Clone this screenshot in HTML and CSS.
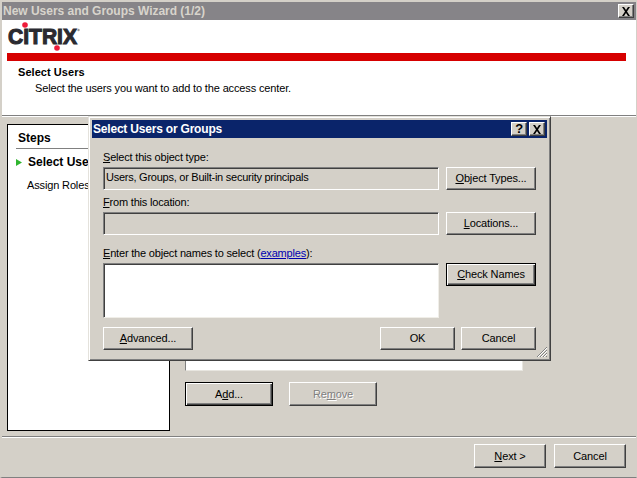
FILE: index.html
```html
<!DOCTYPE html>
<html lang="en">
<head>
<meta charset="utf-8">
<title>New Users and Groups Wizard (1/2)</title>
<link rel="stylesheet" href="styles.css">
</head>
<body>
<div class="window">
  <div class="titlebar">
    <span class="title-text">New Users and Groups Wizard (1/2)</span>
    <span class="capbtn wiz-close"><svg width="10" height="9" viewBox="0 0 10 9"><path d="M1 0h2l2 3 2-3h2L6 4.500 9 9H7L5 6 3 9H1l3-4.500z" fill="#000"/></svg></span>
  </div>
  <div class="header">
    <div class="logo">
      <svg width="84" height="33" viewBox="0 0 84 33">
        <text x="1" y="24" class="logo-text" textLength="69" lengthAdjust="spacingAndGlyphs">CITRIX</text>
        <circle cx="18" cy="5" r="2.800" fill="#ee1c3a"/>
        <circle cx="50" cy="28" r="2.800" fill="#ee1c3a"/>
        <circle cx="71.500" cy="10" r="1.200" fill="#999"/>
      </svg>
    </div>
    <div class="redbar"></div>
    <div class="head-title">Select Users</div>
    <div class="head-sub">Select the users you want to add to the access center.</div>
  </div>
  <div class="body">
    <div class="steps">
      <div class="steps-title">Steps</div>
      <div class="step current"><svg class="arrow" width="6" height="7" viewBox="0 0 6 7"><path d="M0 0l6 3.500L0 7z" fill="#2fb52f"/></svg><span>Select Users</span></div>
      <div class="step next">Assign Roles</div>
    </div>
    <div class="content">
      <div class="listbox"></div>
      <div class="content-buttons">
        <button class="btn default wide"><span>A<u>d</u>d...</span></button>
        <button class="btn disabled wide">Re<u>m</u>ove</button>
      </div>
    </div>
  </div>
  <div class="footer">
    <button class="btn nav"><span><u>N</u>ext &gt;</span></button>
    <button class="btn nav">Cancel</button>
  </div>

  <div class="dialog">
    <div class="dlg-title">
      <span>Select Users or Groups</span>
      <span class="dlg-caps">
        <span class="capbtn help">?</span>
        <span class="capbtn"><svg width="10" height="9" viewBox="0 0 10 9"><path d="M1 0h2l2 3 2-3h2L6 4.500 9 9H7L5 6 3 9H1l3-4.500z" fill="#000"/></svg></span>
      </span>
    </div>
    <div class="dlg-body">
      <label class="lbl lbl-first"><u>S</u>elect this object type:</label>
      <div class="field">Users, Groups, or Built-in security principals</div>
      <button class="btn side"><span><u>O</u>bject Types...</span></button>
      <label class="lbl lbl-second"><u>F</u>rom this location:</label>
      <div class="field"></div>
      <button class="btn side"><span><u>L</u>ocations...</span></button>
      <label class="lbl lbl-third"><u>E</u>nter the object names to select (<a href="#">examples</a>):</label>
      <div class="field names"></div>
      <button class="btn side default"><span><u>C</u>heck Names</span></button>
      <div class="dlg-actions">
        <button class="btn advanced"><span><u>A</u>dvanced...</span></button>
        <div class="dlg-right">
          <button class="btn ok">OK</button>
          <button class="btn ok">Cancel</button>
        </div>
      </div>
    </div>
    <svg class="grip" width="12" height="12" viewBox="0 0 12 12"><path d="M11 1L1 11M11 4L4 11M11 7L7 11M11 10L10 11" stroke="#808080" stroke-width="1" fill="none"/><path d="M11 2L2 11M11 5L5 11M11 8L8 11" stroke="#fff" stroke-width="1" fill="none"/></svg>
  </div>
</div>
</body>
</html>
```
FILE: styles.css
```css
* { box-sizing: border-box; }
html, body { margin: 0; padding: 0; }
body {
  width: 637px;
  height: 478px;
  overflow: hidden;
  font-family: "Liberation Sans", Arial, sans-serif;
  font-size: 11px;
  letter-spacing: -0.14px;
  color: #000;
  background: #d4d0c8;
}
.window {
  position: relative;
  width: 637px;
  height: 478px;
  display: flex;
  flex-direction: column;
  background: #d4d0c8;
  border-top: 2px solid #d4d0c8;
  border-left: 2px solid #d4d0c8;
  border-right: 1px solid #d4d0c8;
  border-bottom: 1px solid #808080;
}
.titlebar {
  height: 18px;
  flex: none;
  display: flex;
  align-items: center;
  justify-content: space-between;
  background: #868488;
  color: #d8d4cc;
  font-size: 12px;
  font-weight: bold;
  letter-spacing: -0.02px;
  padding: 0 2px 0 1px;
}
.capbtn {
  width: 16px;
  height: 14px;
  display: flex;
  align-items: center;
  justify-content: center;
  background: #d4d0c8;
  border-top: 1px solid #fff;
  border-left: 1px solid #fff;
  border-right: 1px solid #404040;
  border-bottom: 1px solid #404040;
  box-shadow: inset -1px -1px 0 #808080;
  color: #000;
}
.header {
  height: 96px;
  flex: none;
  background: #fff;
  border-bottom: 1px solid #808080;
  box-shadow: 0 1px 0 #fff;
  display: flex;
  flex-direction: column;
}
.logo { height: 33px; padding-left: 5px; }
.logo svg { display: block; }
.logo-text {
  font-family: "Liberation Sans", Arial, sans-serif;
  font-weight: bold;
  font-size: 22px;
  letter-spacing: 0;
  fill: #2a2a30;
  stroke: #2a2a30;
  stroke-width: 1.1px;
}
.redbar { height: 8px; margin: 0 10px 0 5px; background: #d60000; }
.head-title { margin: 4px 0 0 16px; line-height: 14px; font-weight: bold; letter-spacing: 0.05px; }
.head-sub { margin: 2px 0 0 33px; line-height: 14px; }

.body {
  flex: 1;
  min-height: 0;
  display: flex;
  padding: 7px 0 5px 5px;
  margin-top: 1px;
}
.steps {
  width: 163px;
  flex: none;
  background: #fff;
  border: 1px solid #000;
  padding: 0 0 0 8px;
}
.steps-title {
  height: 24px;
  line-height: 14px;
  padding: 6px 0 0 2px;
  font-size: 12px;
  font-weight: bold;
  letter-spacing: 0;
  border-bottom: 1px solid #808080;
  margin-right: 8px;
}
.step { line-height: 14px; display: flex; align-items: center; }
.step.current { margin-top: 6px; font-size: 12px; font-weight: bold; letter-spacing: 0; }
.arrow { margin-right: 6px; flex: none; }
.step.next { margin: 9px 0 0 11px; }
.content {
  flex: 1;
  display: flex;
  flex-direction: column;
  margin-left: 15px;
  margin-right: 113px;
}
.listbox {
  flex: 1;
  background: #fff;
  border-top: 1px solid #808080;
  border-left: 1px solid #808080;
  border-right: 1px solid #e8e6e0;
  border-bottom: 1px solid #e8e6e0;
  margin-bottom: 11px;
}
.content-buttons { display: flex; gap: 16px; margin-bottom: 25px; }

.btn {
  display: flex;
  align-items: center;
  justify-content: center;
  padding: 0;
  margin: 0;
  font: inherit;
  letter-spacing: inherit;
  color: #000;
  background: #d4d0c8;
  border-top: 1px solid #fff;
  border-left: 1px solid #fff;
  border-right: 1px solid #404040;
  border-bottom: 1px solid #404040;
  box-shadow: inset -1px -1px 0 #808080;
  height: 23px;
}
.btn.default {
  border: 1px solid #000;
  box-shadow: inset 1px 1px 0 #fff, inset -1px -1px 0 #404040, inset -2px -2px 0 #808080;
}
.btn.wide { width: 88px; height: 24px; }
.btn.disabled { color: #808080; text-shadow: 1px 1px 0 #fff; }
.btn.nav { width: 72px; height: 24px; }
.btn.side { width: 90px; padding-bottom: 2px; }
.btn.advanced { width: 90px; padding-bottom: 2px; }
.btn.ok { width: 75px; padding-bottom: 2px; }

.footer {
  height: 41px;
  flex: none;
  display: flex;
  justify-content: flex-end;
  gap: 8px;
  padding: 7px 10px 0 0;
  border-top: 1px solid #808080;
  box-shadow: inset 0 1px 0 #fff;
}

.dialog {
  position: absolute;
  left: 86px;
  top: 114px;
  width: 463px;
  height: 245px;
  background: #d4d0c8;
  border-top: 1px solid #e4e2dc;
  border-left: 1px solid #e4e2dc;
  border-right: 1px solid #404040;
  border-bottom: 1px solid #404040;
  box-shadow: inset 1px 1px 0 #fff, inset -1px -1px 0 #808080;
  padding: 3px;
}
.dlg-title {
  height: 18px;
  display: flex;
  align-items: center;
  justify-content: space-between;
  background: #0a246a;
  color: #fff;
  font-size: 12px;
  font-weight: bold;
  letter-spacing: -0.2px;
  padding: 0 2px 0 1px;
}
.dlg-caps { display: flex; gap: 2px; }
.help { font-size: 13px; font-weight: bold; line-height: 12px; }
.dlg-body {
  display: grid;
  grid-template-columns: 336px 90px;
  column-gap: 7px;
  padding: 12px 0 0 11px;
}
.lbl { grid-column: 1 / 3; line-height: 14px; height: 14px; margin-bottom: 3px; letter-spacing: -0.19px; }
.lbl-second { margin-top: 5px; }
.lbl-third { margin-top: 11px; }
.lbl a { color: #0000b0; text-decoration: underline; }
.field {
  height: 23px;
  line-height: 18px;
  padding-left: 2px;
  letter-spacing: -0.25px;
  background: #d4d0c8;
  border-top: 1px solid #808080;
  border-left: 1px solid #808080;
  border-right: 1px solid #fff;
  border-bottom: 1px solid #fff;
  box-shadow: inset 1px 1px 0 #404040;
  white-space: nowrap;
}
.field.names { height: 55px; background: #fff; border-right-color: #f0eee8; border-bottom-color: #f0eee8; }
.dlg-actions {
  grid-column: 1 / 3;
  display: flex;
  justify-content: space-between;
  margin-top: 9px;
}
.dlg-right { display: flex; gap: 6px; }
.grip { position: absolute; right: 2px; bottom: 2px; }
```
